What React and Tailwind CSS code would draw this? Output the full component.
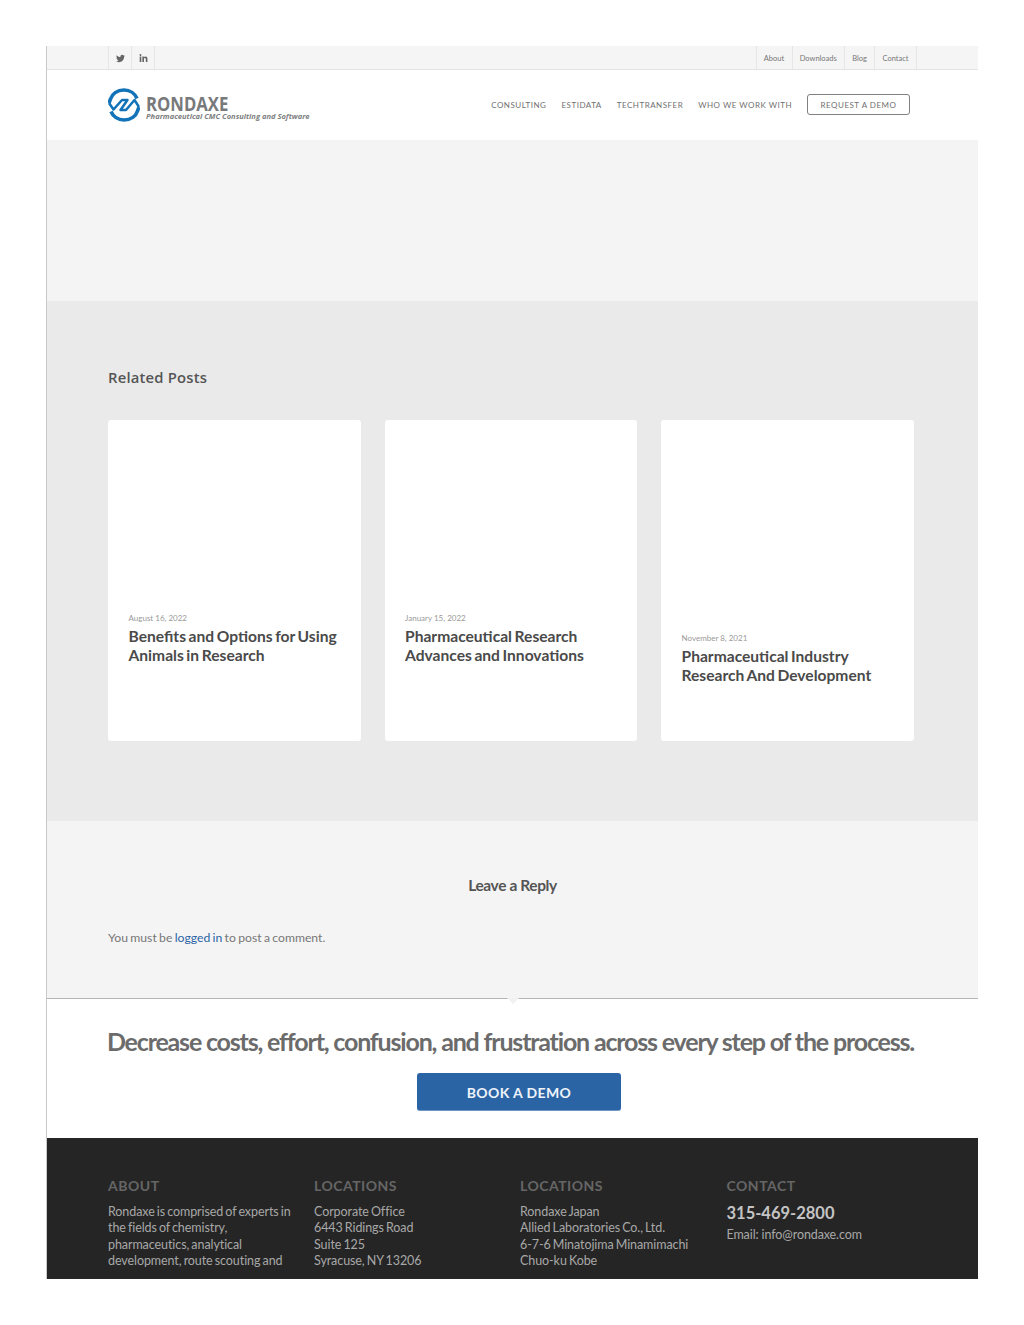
import React from "react";
import { FaTwitter, FaLinkedinIn } from "react-icons/fa";

const topLinks = ["About", "Downloads", "Blog", "Contact"];
const navLinks = ["CONSULTING", "ESTIDATA", "TECHTRANSFER", "WHO WE WORK WITH"];

const posts = [
  { date: "August 16, 2022", title: ["Benefits and Options for Using", "Animals in Research"], pad: "pt-[193px]" },
  { date: "January 15, 2022", title: ["Pharmaceutical Research", "Advances and Innovations"], pad: "pt-[193px]" },
  { date: "November 8, 2021", title: ["Pharmaceutical Industry", "Research And Development"], pad: "pt-[213px]" },
];

function Logo() {
  const arc = "M33 14.5 C31 9.5 26 6 20 6 C13 6 8 10 6.5 15 L5 19";
  return (
    <div className="flex items-start">
      <svg width="32" height="34" viewBox="4 4 32 34" fill="none" stroke="#1273b8" strokeWidth="3.6" strokeLinejoin="round">
        <path d={arc} />
        <path d={arc} transform="rotate(180 20 21)" />
        <path d="M5 19 L9.5 25.5 L18 16 L23.5 16 L16.5 26 L22 26 L30.5 16 L35 23" strokeWidth="2.5" />
      </svg>
      <div className="ml-[6px] pt-[9px] flex flex-col font-['Open_Sans',sans-serif]">
        <div className="h-[14px] text-[19px] leading-[14px] font-bold text-[#77797b] origin-left scale-x-[0.88] whitespace-nowrap">RONDAXE</div>
        <div className="h-[10px] text-[7.55px] leading-[10px] font-bold italic text-[#7d7f81] whitespace-nowrap">Pharmaceutical CMC Consulting and Software</div>
      </div>
    </div>
  );
}

function PostCard({ date, title, pad }) {
  return (
    <div className={`w-[252.5px] h-[320.5px] bg-white rounded-[3px] pl-[20.5px] ${pad}`}>
      <div className="text-[8px] leading-[11px] text-[#999999]">{date}</div>
      <div className="mt-[3px] text-[15.6px] leading-[19px] font-bold text-[#4a4a4a] [word-spacing:-1.2px] whitespace-nowrap">
        {title[0]}
        <br />
        {title[1]}
      </div>
    </div>
  );
}

function FooterCol({ heading, lines, width }) {
  return (
    <div className={width}>
      <div className="text-[14px] leading-[18px] font-bold tracking-[0.5px] text-[#666666]">{heading}</div>
      <div className="mt-[9px] text-[12.5px] leading-[16.4px] text-[#a8a8a8] tracking-[-0.08px] [word-spacing:-1px] whitespace-nowrap">
        {lines.map((l) => (
          <div key={l}>{l}</div>
        ))}
      </div>
    </div>
  );
}

export default function App() {
  return (
    <div className="w-[1024px] h-[1325px] bg-white pt-[46px] pl-[46px] font-['Lato',sans-serif]">
      <div className="w-[932px] h-[1233px] overflow-hidden border-l border-[#c9c9c9]">
        {/* top bar */}
        <div className="flex justify-between h-[24px] bg-[#f5f5f5] border-b border-[#e3e3e3] pl-[61px] pr-[61px]">
          <div className="flex border-l border-[#e6e6e6]">
            <div className="flex items-center justify-center w-[23px] pt-[1px] border-r border-[#e6e6e6] text-[#666666]">
              <FaTwitter size={9} />
            </div>
            <div className="flex items-center justify-center w-[23px] pt-[1px] border-r border-[#e6e6e6] text-[#666666]">
              <FaLinkedinIn size={9} />
            </div>
          </div>
          <div className="flex border-l border-[#e6e6e6] text-[7.5px] text-[#777777]">
            {topLinks.map((l) => (
              <div key={l} className="flex items-center pt-[2px] pl-[7px] pr-[7.5px] border-r border-[#e6e6e6]">
                {l}
              </div>
            ))}
          </div>
        </div>

        {/* header */}
        <div className="flex items-center justify-between h-[70px] bg-white pl-[61px] pr-[68px]">
          <Logo />
          <div className="flex items-center gap-[15px] mb-[1px] text-[8px] tracking-[0.5px] text-[#707070]">
            {navLinks.map((l) => (
              <span key={l}>{l}</span>
            ))}
            <span className="flex items-center justify-center w-[103px] h-[21px] border-[1.5px] border-[#808080] rounded-[3px]">REQUEST A DEMO</span>
          </div>
        </div>

        <div className="h-[161px] bg-[#f4f4f4]" />

        {/* related posts */}
        <div className="h-[520px] bg-[#eaeaea] pl-[61px] pt-[66px]">
          <div className="text-[14.8px] leading-[20px] font-['Open_Sans',sans-serif] font-semibold tracking-[0.2px] text-[#555555]">Related Posts</div>
          <div className="flex gap-[24px] mt-[33px]">
            {posts.map((p) => (
              <PostCard key={p.date} {...p} />
            ))}
          </div>
        </div>

        {/* reply */}
        <div className="h-[177px] bg-[#f4f4f4] pl-[61px] pt-[54px]">
          <div className="-ml-[61px] text-center text-[15.5px] leading-[20px] font-bold tracking-[-0.4px] text-[#555555]">Leave a Reply</div>
          <div className="mt-[33px] text-[12.2px] leading-[20px] text-[#777777] [word-spacing:-0.8px]">
            You must be <span className="text-[#2b64a5]">logged in</span> to post a comment.
          </div>
        </div>

        {/* call to action */}
        <div className="relative h-[140px] bg-white border-t border-[#b5b5b5] pt-[26px] pr-[4px] text-center">
          <div className="absolute left-[460px] -top-[1px] w-[12px] h-[6px] bg-[#f1f1f1] [clip-path:polygon(0_0,100%_0,50%_100%)]" />
          <div className="text-[25px] leading-[32px] font-bold tracking-[-1.18px] text-[#6b6b6b] whitespace-nowrap">
            Decrease costs, effort, confusion, and frustration across every step of the process.
          </div>
          <div className="flex justify-center pl-[17px] mt-[16px]">
            <div className="flex items-center justify-center w-[204px] h-[38px] pt-[1px] bg-[#2b64a5] border-b border-[#6f97c6] rounded-[3px] text-[14px] font-bold tracking-[0.4px] text-[#eef3f9]">BOOK A DEMO</div>
          </div>
        </div>

        {/* footer */}
        <div className="flex h-[141px] bg-[#252525] pl-[61px] pt-[39px]">
          <FooterCol
            width="w-[206px]"
            heading="ABOUT"
            lines={["Rondaxe is comprised of experts in", "the fields of chemistry,", "pharmaceutics, analytical", "development, route scouting and"]}
          />
          <FooterCol
            width="w-[206px]"
            heading="LOCATIONS"
            lines={["Corporate Office", "6443 Ridings Road", "Suite 125", "Syracuse, NY 13206"]}
          />
          <FooterCol
            width="w-[206.5px]"
            heading="LOCATIONS"
            lines={["Rondaxe Japan", "Allied Laboratories Co., Ltd.", "6-7-6 Minatojima Minamimachi", "Chuo-ku Kobe"]}
          />
          <div>
            <div className="text-[14px] leading-[18px] font-bold tracking-[0.5px] text-[#666666]">CONTACT</div>
            <div className="mt-[7px] text-[16.5px] leading-[22px] font-bold text-[#c4c4c4]">315-469-2800</div>
            <div className="mt-[3px] text-[12.5px] leading-[16px] tracking-[-0.1px] text-[#a8a8a8]">Email: info@rondaxe.com</div>
          </div>
        </div>
      </div>
    </div>
  );
}
